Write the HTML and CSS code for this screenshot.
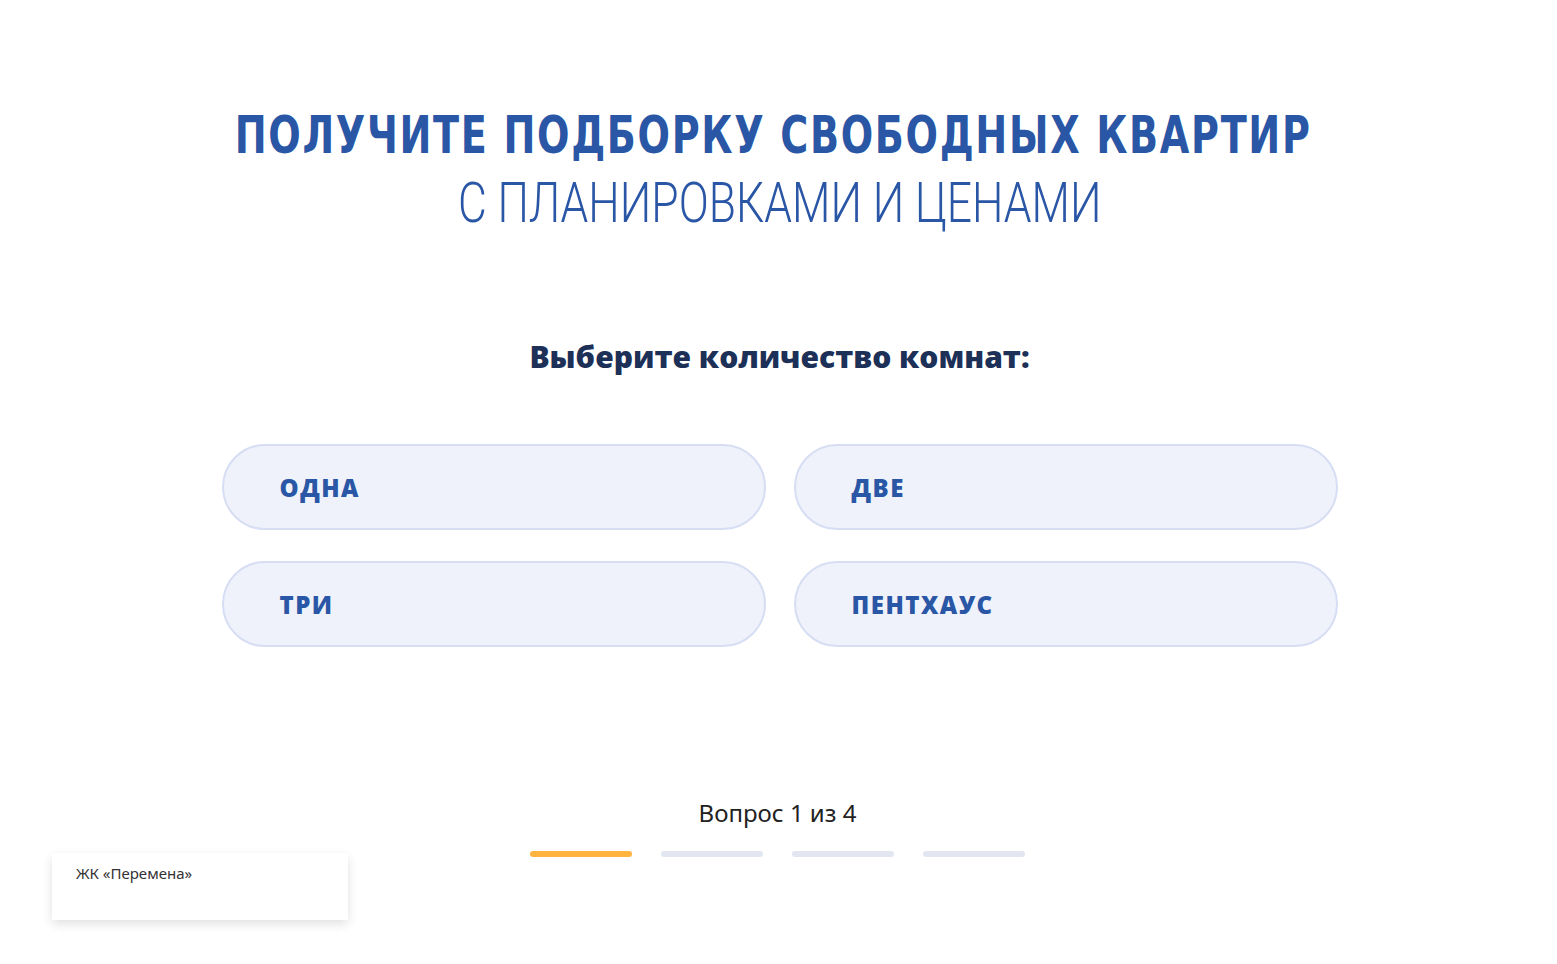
FILE: index.html
```html
<!DOCTYPE html>
<html lang="ru">
<head>
<meta charset="utf-8">
<title>Подбор квартир</title>
<link rel="stylesheet" href="styles.css">
</head>
<body>
<main class="quiz">
  <h1 class="title">
    <span class="title-main">ПОЛУЧИТЕ ПОДБОРКУ СВОБОДНЫХ КВАРТИР</span>
    <span class="title-sub">С ПЛАНИРОВКАМИ И ЦЕНАМИ</span>
  </h1>
  <h2 class="question">Выберите количество комнат:</h2>
  <div class="options">
    <button class="option">ОДНА</button>
    <button class="option">ДВЕ</button>
    <button class="option">ТРИ</button>
    <button class="option">ПЕНТХАУС</button>
  </div>
  <div class="progress">
    <div class="progress-label">Вопрос 1 из 4</div>
    <div class="progress-bars">
      <span class="bar active"></span>
      <span class="bar"></span>
      <span class="bar"></span>
      <span class="bar"></span>
    </div>
  </div>
</main>
<div class="card">ЖК «Перемена»</div>
</body>
</html>
```

FILE: styles.css
```css
html, body {
  margin: 0;
  padding: 0;
  background: #ffffff;
}
body {
  width: 1557px;
  height: 964px;
  position: relative;
  overflow: hidden;
  font-family: "Open Sans", "Noto Sans", sans-serif;
}
.quiz {
  display: flex;
  flex-direction: column;
  align-items: center;
  padding-top: 108px;
  padding-left: 2px;
}
.title {
  margin: 0;
  display: flex;
  flex-direction: column;
  align-items: center;
  color: #2a56a6;
  font-weight: normal;
}
.title-main {
  display: inline-block;
  font-family: "DejaVu Sans", sans-serif;
  font-stretch: condensed;
  font-weight: 700;
  font-size: 51px;
  line-height: 56px;
  letter-spacing: 2px;
  white-space: nowrap;
  margin-left: -12px;
  transform: scaleX(0.832);
}
.title-sub {
  display: inline-block;
  font-family: "Roboto", sans-serif;
  font-weight: 300;
  font-size: 55px;
  line-height: 62px;
  margin-top: 8px;
  white-space: nowrap;
  transform: scaleX(0.807);
}
.question {
  margin: 103px 0 0 0;
  font-family: "Open Sans", sans-serif;
  font-weight: 800;
  font-size: 30px;
  line-height: 40px;
  color: #1d3057;
}
.options {
  margin-top: 67px;
  display: grid;
  grid-template-columns: 544px 544px;
  column-gap: 28px;
  row-gap: 31px;
}
.option {
  height: 86px;
  box-sizing: border-box;
  border: 2px solid #d7def3;
  border-radius: 43px;
  background: #eff2fa;
  text-align: left;
  padding: 0 0 0 56px;
  font-family: "Open Sans", sans-serif;
  font-weight: 800;
  font-size: 24px;
  letter-spacing: 1.5px;
  color: #2a56a6;
}
.progress {
  margin-top: 150px;
  display: flex;
  flex-direction: column;
  align-items: center;
}
.progress-label {
  font-family: "Noto Sans", sans-serif;
  font-size: 24px;
  line-height: 32px;
  color: #222222;
  margin-left: -4px;
}
.progress-bars {
  margin-top: 22px;
  margin-left: -4px;
  display: flex;
  gap: 29px;
}
.bar {
  width: 102px;
  height: 6px;
  border-radius: 3px;
  background: #e1e6f1;
}
.bar.active {
  background: #ffb43f;
}
.card {
  position: absolute;
  left: 52px;
  top: 853px;
  width: 296px;
  height: 67px;
  box-sizing: border-box;
  padding: 10px 24px;
  background: #ffffff;
  box-shadow: 0 4px 10px rgba(0, 0, 0, 0.12);
  font-family: "Noto Sans", sans-serif;
  font-size: 15px;
  color: #333333;
}
```
